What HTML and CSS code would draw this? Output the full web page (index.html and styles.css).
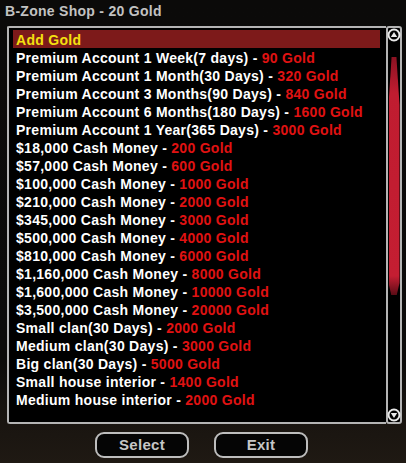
FILE: index.html
```html
<!DOCTYPE html>
<html>
<head>
<meta charset="utf-8">
<link rel="stylesheet" href="styles.css">
</head>
<body>
<div class="window">
  <div class="title">B-Zone Shop - 20 Gold</div>
  <div class="panel">
    <div class="list">
      <div class="row sel">Add Gold</div>
      <div class="row">Premium Account 1 Week(7 days) - <span class="p">90 Gold</span></div>
      <div class="row">Premium Account 1 Month(30 Days) - <span class="p">320 Gold</span></div>
      <div class="row">Premium Account 3 Months(90 Days) - <span class="p">840 Gold</span></div>
      <div class="row">Premium Account 6 Months(180 Days) - <span class="p">1600 Gold</span></div>
      <div class="row">Premium Account 1 Year(365 Days) - <span class="p">3000 Gold</span></div>
      <div class="row">$18,000 Cash Money - <span class="p">200 Gold</span></div>
      <div class="row">$57,000 Cash Money - <span class="p">600 Gold</span></div>
      <div class="row">$100,000 Cash Money - <span class="p">1000 Gold</span></div>
      <div class="row">$210,000 Cash Money - <span class="p">2000 Gold</span></div>
      <div class="row">$345,000 Cash Money - <span class="p">3000 Gold</span></div>
      <div class="row">$500,000 Cash Money - <span class="p">4000 Gold</span></div>
      <div class="row">$810,000 Cash Money - <span class="p">6000 Gold</span></div>
      <div class="row">$1,160,000 Cash Money - <span class="p">8000 Gold</span></div>
      <div class="row">$1,600,000 Cash Money - <span class="p">10000 Gold</span></div>
      <div class="row">$3,500,000 Cash Money - <span class="p">20000 Gold</span></div>
      <div class="row">Small clan(30 Days) - <span class="p">2000 Gold</span></div>
      <div class="row">Medium clan(30 Days) - <span class="p">3000 Gold</span></div>
      <div class="row">Big clan(30 Days) - <span class="p">5000 Gold</span></div>
      <div class="row">Small house interior - <span class="p">1400 Gold</span></div>
      <div class="row">Medium house interior - <span class="p">2000 Gold</span></div>
    </div>
    <div class="scroll">
      <svg class="arrow" width="14" height="14" viewBox="0 0 14 14"><circle cx="7" cy="7" r="5.5" fill="#000" stroke="#e8e8e8" stroke-width="2"/><path d="M3.8 9 L7 4 L10.2 9 Z" fill="#e8e8e8"/></svg>
      <div class="track"><div class="thumb"></div></div>
      <svg class="arrow" width="14" height="14" viewBox="0 0 14 14"><circle cx="7" cy="7" r="5.5" fill="#000" stroke="#e8e8e8" stroke-width="2"/><path d="M3.8 5 L7 10 L10.2 5 Z" fill="#e8e8e8"/></svg>
    </div>
  </div>
  <div class="buttons">
    <div class="btn">Select</div>
    <div class="btn">Exit</div>
  </div>
</div>
</body>
</html>
```
FILE: styles.css
```css
html, body {
  margin: 0;
  padding: 0;
}
body {
  width: 406px;
  height: 463px;
  overflow: hidden;
  background: linear-gradient(180deg, #0b0a09 0%, #0c0b0a 78%, #17130f 88%, #1f1913 100%);
  font-family: "Liberation Sans", Arial, sans-serif;
  font-weight: bold;
}
.window {
  display: flex;
  flex-direction: column;
}
.title {
  height: 26px;
  padding-left: 5px;
  color: #c2c2c2;
  font-size: 14px;
  line-height: 22px;
  letter-spacing: 0.28px;
}
.panel {
  display: flex;
  margin-left: 7px;
  height: 398px;
}
.list {
  width: 379px;
  border: 2px solid #b4b4b4;
  border-right: none;
  border-radius: 2px 0 0 3px;
  background: #000;
  padding: 2px 0 0 4px;
  box-sizing: border-box;
}
.row {
  height: 18px;
  line-height: 20px;
  padding-left: 3px;
  width: 367px;
  box-sizing: border-box;
  color: #fff;
  font-size: 14px;
  letter-spacing: 0.28px;
  white-space: nowrap;
}
.row.sel {
  background: #7d1a1a;
  color: #f4e010;
}
.p {
  color: #e01212;
}
.scroll {
  width: 16px;
  border: 2px solid #b4b4b4;
  border-radius: 3px;
  background: #000;
  box-sizing: border-box;
  display: flex;
  flex-direction: column;
  align-items: center;
}
.arrow {
  flex: none;
}
.track {
  flex: 1;
  width: 12px;
  display: flex;
  justify-content: center;
  padding-top: 15px;
}
.thumb {
  width: 11px;
  height: 238px;
  background: linear-gradient(180deg, #8a1222 0%, #c01c30 15%, #c41e32 92%, #5a0c16 100%);
  clip-path: polygon(28% 0, 72% 0, 100% 20%, 100% 95%, 75% 100%, 25% 100%, 0 95%, 0 20%);
}
.buttons {
  display: flex;
  gap: 25px;
  margin-top: 8px;
  padding-left: 95px;
}
.btn {
  width: 94px;
  height: 26px;
  box-sizing: border-box;
  border: 2px solid #bdbdbd;
  border-radius: 9px;
  background: #050505;
  color: #c6c6c6;
  font-size: 15px;
  line-height: 22px;
  letter-spacing: 0.3px;
  text-align: center;
}
```
